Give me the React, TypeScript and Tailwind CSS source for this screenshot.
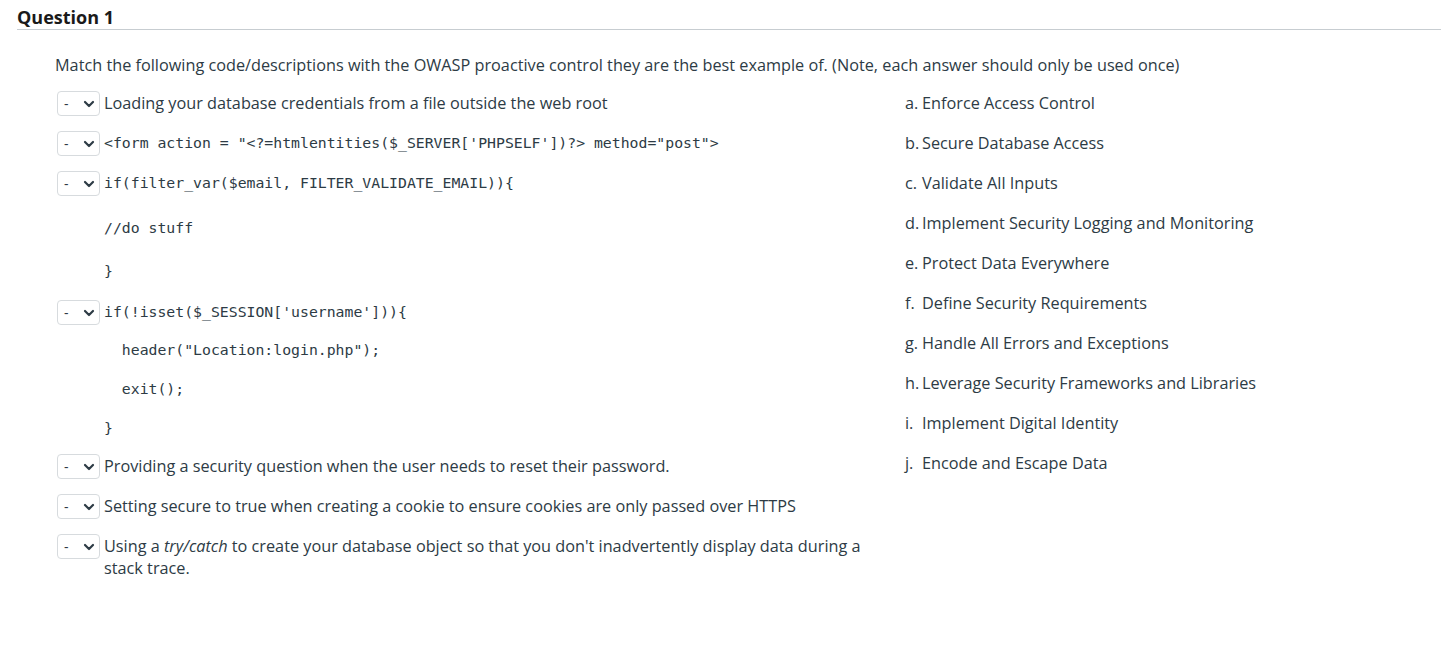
import React from 'react';

const sans = { fontFamily: '"Open Sans", "Noto Sans", sans-serif' };

const Select = () => (
  <div className="flex h-[25px] w-[43px] shrink-0 items-center justify-between rounded-[4px] border border-[#d7dbde] bg-white pl-[6px] pr-[3px] text-[14px] text-[#2d3b45]">
    <span className="leading-none">-</span>
    <svg width="12" height="12" viewBox="0 0 12 12" className="mr-[1px]">
      <path d="M2 4 L6 8 L10 4" fill="none" stroke="#2d3b45" strokeWidth="2.2" strokeLinecap="round" strokeLinejoin="round" />
    </svg>
  </div>
);

const Code: React.FC<{ children: React.ReactNode; className?: string }> = ({ children, className = '' }) => (
  <div
    className={`flex h-[25px] items-center whitespace-pre text-[14.8px] text-[#2d3b45] ${className}`}
    style={{ fontFamily: '"DejaVu Sans Mono", "Liberation Mono", monospace' }}
  >
    {children}
  </div>
);

const Line: React.FC<{ children: React.ReactNode; className?: string }> = ({ children, className = '' }) => (
  <div className={`flex h-[25px] items-center text-[16.25px] text-[#2d3b45] ${className}`}>{children}</div>
);

const answers = [
  ['a.', 'Enforce Access Control'],
  ['b.', 'Secure Database Access'],
  ['c.', 'Validate All Inputs'],
  ['d.', 'Implement Security Logging and Monitoring'],
  ['e.', 'Protect Data Everywhere'],
  ['f.', 'Define Security Requirements'],
  ['g.', 'Handle All Errors and Exceptions'],
  ['h.', 'Leverage Security Frameworks and Libraries'],
  ['i.', 'Implement Digital Identity'],
  ['j.', 'Encode and Escape Data'],
];

export default function App() {
  return (
    <div className="min-h-[666px] w-full bg-white text-[#2d3b45]" style={sans}>
      {/* Header */}
      <div className="pl-[17px] pt-[5px]">
        <h2 className="text-[18px] font-bold leading-[24px] text-[#1a1a1a]">Question 1</h2>
        <div className="h-px bg-[#c7cdd1]" />
      </div>

      <div className="pl-[55px] pt-[24px]">
        <p className="text-[16.25px] leading-[22px]">
          Match the following code/descriptions with the OWASP proactive control they are the best example of. (Note, each answer should only be used once)
        </p>

        <div className="mt-[15px] flex">
          {/* Left: statements */}
          <div className="ml-[2px] flex w-[820px] flex-col gap-[15px]">
            <div className="flex gap-[4px]">
              <Select />
              <Line>Loading your database credentials from a file outside the web root</Line>
            </div>

            <div className="flex gap-[4px]">
              <Select />
              <Code>{`<form action = "<?=htmlentities($_SERVER['PHPSELF'])?> method="post">`}</Code>
            </div>

            <div className="flex gap-[4px]">
              <Select />
              <div className="flex flex-col">
                <Code>{`if(filter_var($email, FILTER_VALIDATE_EMAIL)){`}</Code>
                <Code className="mt-[20px]">{`//do stuff`}</Code>
                <Code className="mt-[18px]">{`}`}</Code>
              </div>
            </div>

            <div className="mt-[1px] flex gap-[4px]">
              <Select />
              <div className="flex flex-col">
                <Code>{`if(!isset($_SESSION['username'])){`}</Code>
                <Code className="mt-[13px]">{`  header("Location:login.php");`}</Code>
                <Code className="mt-[14px]">{`  exit();`}</Code>
                <Code className="mt-[14px]">{`}`}</Code>
              </div>
            </div>

            <div className="-mt-[2px] flex gap-[4px]">
              <Select />
              <Line>Providing a security question when the user needs to reset their password.</Line>
            </div>

            <div className="flex gap-[4px]">
              <Select />
              <Line>Setting secure to true when creating a cookie to ensure cookies are only passed over HTTPS</Line>
            </div>

            <div className="flex gap-[4px]">
              <Select />
              <p className="pt-[1px] text-[16.25px] leading-[22px]">
                Using a <em>try/catch</em> to create your database object so that you don't inadvertently display data during a stack trace.
              </p>
            </div>
          </div>

          {/* Right: answers */}
          <div className="ml-[28px] -mt-[8px] flex flex-col">
            {answers.map(([k, v]) => (
              <div key={k} className="flex h-[40px] items-center text-[16.25px]">
                <span className="w-[17px] shrink-0">{k}</span>
                <span>{v}</span>
              </div>
            ))}
          </div>
        </div>
      </div>
    </div>
  );
}
